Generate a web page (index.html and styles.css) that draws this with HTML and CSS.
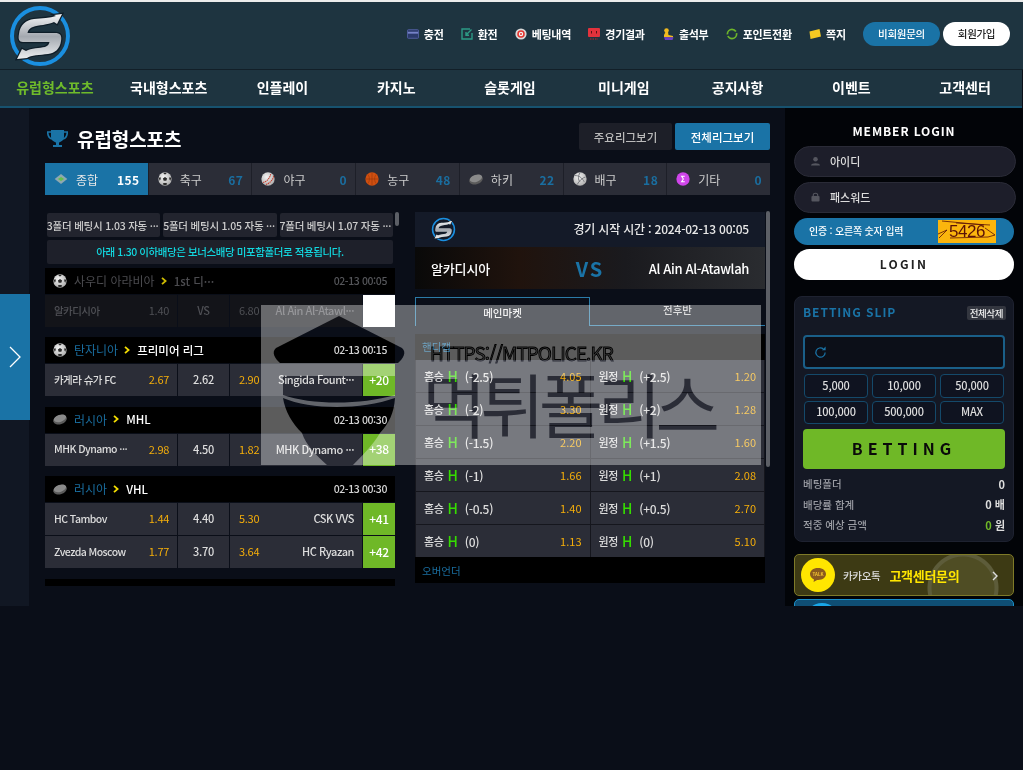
FILE: index.html
```html
<!DOCTYPE html>
<html lang="ko">
<head>
<meta charset="utf-8">
<title>유럽형스포츠</title>
<link rel="stylesheet" href="styles.css">
</head>
<body>
<svg class="defs" width="0" height="0" aria-hidden="true">
  <defs>
    <linearGradient id="silver" x1="0" y1="0" x2="0" y2="1">
      <stop offset="0" stop-color="#f4f5f7"/><stop offset=".5" stop-color="#a4a9b0"/><stop offset="1" stop-color="#eceef0"/>
    </linearGradient>
    <radialGradient id="ballshade" cx=".4" cy=".35" r=".75">
      <stop offset="0" stop-color="#f2f2f2"/><stop offset="1" stop-color="#a8a8a8"/>
    </radialGradient>
    <symbol id="logo" viewBox="0 0 64 64">
      <circle cx="32" cy="32" r="28" fill="none" stroke="#1a8fe0" stroke-width="4"/>
      <path d="M54 10 L49 20 L46 18 C40 21 30 21 25 23 C21 24.5 20 27 19.5 29 L47 29 C52 29 54 31 53 37 C52 45 47 49 40 50 C32 51 23 51 19 54 L9 55 L14 45 L18 47 C23 44 32 44 37 43 C40 42 41 40 41.5 38 L15 38 C11 38 10 35 11 30 C12 21 18 16 26 15 C34 14 42 14 48 12 L46 11 Z" fill="#0e1d28" stroke="#0e1d28" stroke-width="2.5"/>
      <path d="M54 10 L49 20 L46 18 C40 21 30 21 25 23 C21 24.5 20 27 19.5 29 L47 29 C52 29 54 31 53 37 C52 45 47 49 40 50 C32 51 23 51 19 54 L9 55 L14 45 L18 47 C23 44 32 44 37 43 C40 42 41 40 41.5 38 L15 38 C11 38 10 35 11 30 C12 21 18 16 26 15 C34 14 42 14 48 12 L46 11 Z" fill="url(#silver)"/>
    </symbol>
    <symbol id="soccer" viewBox="0 0 20 20">
      <circle cx="10" cy="10" r="9.5" fill="url(#ballshade)"/>
      <path d="M10 7 L13 9.2 L11.9 12.6 L8.1 12.6 L7 9.2 Z M10 .8 L7.6 2 L10 3.4 L12.4 2 Z M1.2 8.5 L2.4 12.4 L4 10 L3.4 7 Z M18.8 8.5 L17.6 12.4 L16 10 L16.6 7 Z M6.6 17.6 L10 19 L13.4 17.6 L12 15.8 L8 15.8 Z" fill="#2b2b2b"/>
    </symbol>
    <symbol id="puck" viewBox="0 0 20 20">
      <ellipse cx="10" cy="11" rx="10" ry="6.5" fill="#5b5b5b" transform="rotate(-18 10 11)"/>
      <ellipse cx="10" cy="9" rx="9" ry="5" fill="#8a8a8a" transform="rotate(-18 10 9)"/>
    </symbol>
    <symbol id="chev" viewBox="0 0 6 8">
      <path d="M1 .8 L4.6 4 L1 7.2" fill="none" stroke="#f2dc00" stroke-width="1.8"/>
    </symbol>
  </defs>
</svg>

<header class="header">
  <svg class="logo"><use href="#logo"/></svg>
  <nav class="tools">
    <a class="tool"><svg class="tool-ico" viewBox="0 0 14 12"><rect x=".5" y="1" width="13" height="10" rx="1" fill="#2b3a6b" stroke="#5664a8"/><rect x="1" y="3.4" width="12" height="2.2" fill="#7682c8"/></svg>충전</a>
    <a class="tool"><svg class="tool-ico" viewBox="0 0 12 12"><path d="M9 1 H1 V11 H11 V5" fill="none" stroke="#2d9a85" stroke-width="1.4"/><path d="M10.5 1.5 L5 7 M5 4 V7.2 H8" fill="none" stroke="#2d9a85" stroke-width="1.4"/></svg>환전</a>
    <a class="tool"><svg class="tool-ico" viewBox="0 0 12 12"><circle cx="6" cy="6" r="5.6" fill="#d9d9d9"/><circle cx="6" cy="6" r="3.8" fill="#e4352f"/><circle cx="6" cy="6" r="2.2" fill="#f3f3f3"/><circle cx="6" cy="6" r="1" fill="#e4352f"/></svg>베팅내역</a>
    <a class="tool"><svg class="tool-ico" viewBox="0 0 12 12"><rect x="0" y="0" width="12" height="9" rx="1" fill="#e2323c"/><path d="M3.5 3 V5.5 M8.5 3 V5.5" stroke="#5a1015" stroke-width="1"/><path d="M2 11 H10" stroke="#b5282f" stroke-width="1" stroke-dasharray="1.5 1"/></svg>경기결과</a>
    <a class="tool"><svg class="tool-ico" viewBox="0 0 12 12"><circle cx="4.5" cy="2.6" r="2.3" fill="#f0b91e"/><path d="M3.5 4 H6 L6.5 7 L11 8 V9.5 L2 9 V7 Z" fill="#f0b91e"/><path d="M2 9 L11.5 9.3 L10.5 12 L3 12 Z" fill="#6a3fc0"/></svg>출석부</a>
    <a class="tool"><svg class="tool-ico" viewBox="0 0 12 12"><circle cx="6" cy="6" r="4.6" fill="none" stroke="#6db52a" stroke-width="1.7" stroke-dasharray="12 1.6 12 1.6"/></svg>포인트전환</a>
    <a class="tool"><svg class="tool-ico" viewBox="0 0 12 12"><path d="M.5 3.5 L10.5 1 L12 8.5 L1.5 11 Z" fill="#f5c922"/></svg>쪽지</a>
    <a class="pill pill-blue">비회원문의</a>
    <a class="pill pill-white">회원가입</a>
  </nav>
</header>

<nav class="menu">
  <a class="menu-item is-active">유럽형스포츠</a>
  <a class="menu-item">국내형스포츠</a>
  <a class="menu-item">인플레이</a>
  <a class="menu-item">카지노</a>
  <a class="menu-item">슬롯게임</a>
  <a class="menu-item">미니게임</a>
  <a class="menu-item">공지사항</a>
  <a class="menu-item">이벤트</a>
  <a class="menu-item">고객센터</a>
</nav>

<main class="main">
  <aside class="rail">
    <div class="rail-tab"><svg class="rail-arrow" viewBox="0 0 12 22"><path d="M1 1 L11 11 L1 21" fill="none" stroke="#fff" stroke-width="1.3"/></svg></div>
  </aside>

  <section class="content">
    <div class="title-row">
      <h1 class="title">
        <svg class="trophy" viewBox="0 0 21 19"><path d="M4 0 H17 V7 C17 10 14 12 12 12.5 V15 H15 V17 H6 V15 H9 V12.5 C7 12 4 10 4 7 Z" fill="#1a73a6"/><path d="M4 2 H.7 C.7 6 2 8 5 9 M17 2 H20.3 C20.3 6 19 8 16 9" fill="none" stroke="#1a73a6" stroke-width="1.6"/></svg>
        유럽형스포츠
      </h1>
      <div class="view-btns">
        <a class="view-btn">주요리그보기</a>
        <a class="view-btn is-on">전체리그보기</a>
      </div>
    </div>

    <div class="sports">
      <a class="sport is-on"><svg class="sport-ico" viewBox="0 0 20 20"><path d="M10 3 L19 10 L10 17 L1 10 Z" fill="#8fa8b0"/><path d="M10 7 L14.5 10 L10 13 L5.5 10 Z" fill="#63c04a"/></svg><span class="sport-name">종합</span><b class="sport-num">155</b></a>
      <a class="sport"><svg class="sport-ico"><use href="#soccer"/></svg><span class="sport-name">축구</span><b class="sport-num">67</b></a>
      <a class="sport"><svg class="sport-ico" viewBox="0 0 20 20"><circle cx="10" cy="10" r="9.5" fill="url(#ballshade)"/><path d="M3 15 C8 14 13 9 14 2 M7 18 C12 16 17 12 18 6" fill="none" stroke="#c43a2a" stroke-width="1.5" stroke-dasharray="2 1"/></svg><span class="sport-name">야구</span><b class="sport-num">0</b></a>
      <a class="sport"><svg class="sport-ico" viewBox="0 0 20 20"><circle cx="10" cy="10" r="9.5" fill="#cf4f10"/><path d="M1 10 H19 M10 1 V19 M4 3.5 C7 7 7 13 4 16.5 M16 3.5 C13 7 13 13 16 16.5" fill="none" stroke="#8a3408" stroke-width=".7"/></svg><span class="sport-name">농구</span><b class="sport-num">48</b></a>
      <a class="sport"><svg class="sport-ico"><use href="#puck"/></svg><span class="sport-name">하키</span><b class="sport-num">22</b></a>
      <a class="sport"><svg class="sport-ico" viewBox="0 0 20 20"><circle cx="10" cy="10" r="9.5" fill="url(#ballshade)"/><path d="M10 1 C7 6 7 11 10 14 M3 5 C8 5 13 8 16 14 M18 7 C14 8 8 13 6 18" fill="none" stroke="#6a6c72" stroke-width="1.2"/></svg><span class="sport-name">배구</span><b class="sport-num">18</b></a>
      <a class="sport"><svg class="sport-ico" viewBox="0 0 20 20"><circle cx="10" cy="10" r="9.5" fill="#cf45ea"/><path d="M12.5 6 H8 L10.5 10 L8 14 H12.5" fill="none" stroke="#fff" stroke-width="1.5"/></svg><span class="sport-name">기타</span><b class="sport-num">0</b></a>
    </div>

    <div class="panes">
      <div class="pane-left">
        <div class="bonus-row">
          <a class="bonus">3폴더 베팅시 1.03 자동 ···</a>
          <a class="bonus">5폴더 베팅시 1.05 자동 ···</a>
          <a class="bonus">7폴더 베팅시 1.07 자동 ···</a>
        </div>
        <p class="notice">아래 1.30 이하배당은 보너스배당 미포함폴더로 적용됩니다.</p>

        <div class="group is-dim">
          <div class="league"><svg class="league-ico"><use href="#soccer"/></svg><span class="country">사우디 아라비아</span><svg class="chev"><use href="#chev"/></svg><span class="league-name">1st 디···</span><time class="kick">02-13 00:05</time></div>
          <div class="row"><div class="side"><span class="team">알카디시아</span><span class="odd">1.40</span></div><div class="mid">VS</div><div class="side"><span class="odd">6.80</span><span class="team team-r">Al Ain Al-Atawl···</span></div><div class="plus is-blank"></div></div>
        </div>

        <div class="group">
          <div class="league"><svg class="league-ico"><use href="#soccer"/></svg><span class="country">탄자니아</span><svg class="chev"><use href="#chev"/></svg><span class="league-name">프리미어 리그</span><time class="kick">02-13 00:15</time></div>
          <div class="row"><div class="side"><span class="team">카게라 슈가 FC</span><span class="odd">2.67</span></div><div class="mid">2.62</div><div class="side"><span class="odd">2.90</span><span class="team team-r">Singida Fount···</span></div><div class="plus">+20</div></div>
        </div>

        <div class="group">
          <div class="league"><svg class="league-ico"><use href="#puck"/></svg><span class="country">러시아</span><svg class="chev"><use href="#chev"/></svg><span class="league-name">MHL</span><time class="kick">02-13 00:30</time></div>
          <div class="row"><div class="side"><span class="team">MHK Dynamo ···</span><span class="odd">2.98</span></div><div class="mid">4.50</div><div class="side"><span class="odd">1.82</span><span class="team team-r">MHK Dynamo ···</span></div><div class="plus">+38</div></div>
        </div>

        <div class="group">
          <div class="league"><svg class="league-ico"><use href="#puck"/></svg><span class="country">러시아</span><svg class="chev"><use href="#chev"/></svg><span class="league-name">VHL</span><time class="kick">02-13 00:30</time></div>
          <div class="row"><div class="side"><span class="team">HC Tambov</span><span class="odd">1.44</span></div><div class="mid">4.40</div><div class="side"><span class="odd">5.30</span><span class="team team-r">CSK VVS</span></div><div class="plus">+41</div></div>
          <div class="row row-next"><div class="side"><span class="team">Zvezda Moscow</span><span class="odd">1.77</span></div><div class="mid">3.70</div><div class="side"><span class="odd">3.64</span><span class="team team-r">HC Ryazan</span></div><div class="plus">+42</div></div>
        </div>

        <div class="group-strip"></div>
        <div class="thumb thumb-left"></div>
      </div>

      <div class="pane-right">
        <div class="match-top">
          <svg class="match-logo"><use href="#logo"/></svg>
          <span class="match-time">경기 시작 시간 : 2024-02-13 00:05</span>
        </div>
        <div class="match-teams">
          <span class="match-team">알카디시아</span>
          <span class="vs">VS</span>
          <span class="match-team match-team-away">Al Ain Al-Atawlah</span>
        </div>
        <div class="market-tabs">
          <a class="market-tab is-on">메인마켓</a>
          <a class="market-tab">전후반</a>
        </div>
        <div class="market-head">핸디캡</div>
        <div class="market-grid">
          <div class="cell"><span class="cell-name">홈승</span><b class="h">H</b><span class="line">(-2.5)</span><span class="odd">4.05</span></div>
          <div class="cell"><span class="cell-name">원정</span><b class="h">H</b><span class="line">(+2.5)</span><span class="odd">1.20</span></div>
          <div class="cell"><span class="cell-name">홈승</span><b class="h">H</b><span class="line">(-2)</span><span class="odd">3.30</span></div>
          <div class="cell"><span class="cell-name">원정</span><b class="h">H</b><span class="line">(+2)</span><span class="odd">1.28</span></div>
          <div class="cell"><span class="cell-name">홈승</span><b class="h">H</b><span class="line">(-1.5)</span><span class="odd">2.20</span></div>
          <div class="cell"><span class="cell-name">원정</span><b class="h">H</b><span class="line">(+1.5)</span><span class="odd">1.60</span></div>
          <div class="cell"><span class="cell-name">홈승</span><b class="h">H</b><span class="line">(-1)</span><span class="odd">1.66</span></div>
          <div class="cell"><span class="cell-name">원정</span><b class="h">H</b><span class="line">(+1)</span><span class="odd">2.08</span></div>
          <div class="cell"><span class="cell-name">홈승</span><b class="h">H</b><span class="line">(-0.5)</span><span class="odd">1.40</span></div>
          <div class="cell"><span class="cell-name">원정</span><b class="h">H</b><span class="line">(+0.5)</span><span class="odd">2.70</span></div>
          <div class="cell"><span class="cell-name">홈승</span><b class="h">H</b><span class="line">(0)</span><span class="odd">1.13</span></div>
          <div class="cell"><span class="cell-name">원정</span><b class="h">H</b><span class="line">(0)</span><span class="odd">5.10</span></div>
        </div>
        <div class="market-foot">오버언더</div>
        <div class="thumb thumb-right"></div>
      </div>
    </div>
  </section>

  <aside class="side-col">
    <h2 class="login-title">MEMBER LOGIN</h2>
    <div class="field"><svg class="field-ico" viewBox="0 0 10 10"><circle cx="5" cy="3" r="2.5" fill="#55565f"/><path d="M0 10 C0 6.5 10 6.5 10 10 Z" fill="#55565f"/></svg>아이디</div>
    <div class="field field-next"><svg class="field-ico" viewBox="0 0 10 10"><rect x="0.5" y="4" width="9" height="6" rx="1" fill="#55565f"/><path d="M2.5 4.5 V3 C2.5 0 7.5 0 7.5 3 V4.5" fill="none" stroke="#55565f" stroke-width="1.2"/></svg>패스워드</div>
    <div class="captcha">
      <span class="captcha-label">인증 : 오른쪽 숫자 입력</span>
      <span class="captcha-code">5426<svg class="captcha-lines" viewBox="0 0 58 23"><path d="M0 14 L9 10 L1 18 M4 1 L46 5 M12 18 L50 17 L57 15 L47 8 M18 3 L52 5" fill="none" stroke="#5a1208" stroke-width=".8"/></svg></span>
    </div>
    <a class="login-btn">LOGIN</a>

    <section class="slip">
      <div class="slip-head"><span class="slip-title">BETTING SLIP</span><a class="slip-clear">전체삭제</a></div>
      <div class="slip-input"><svg class="refresh" viewBox="0 0 14 14"><path d="M12 7 A5 5 0 1 1 10 3" fill="none" stroke="#1a73a6" stroke-width="1.3"/><path d="M12.5 .5 V4.5 H8.5 Z" fill="#1a73a6"/></svg></div>
      <div class="amounts">
        <a class="amount">5,000</a><a class="amount">10,000</a><a class="amount">50,000</a>
        <a class="amount">100,000</a><a class="amount">500,000</a><a class="amount">MAX</a>
      </div>
      <a class="bet-btn">BETTING</a>
      <dl class="summary">
        <div class="sum-row"><dt>베팅폴더</dt><dd>0</dd></div>
        <div class="sum-row"><dt>배당률 합계</dt><dd>0 배</dd></div>
        <div class="sum-row"><dt>적중 예상 금액</dt><dd><em class="won">0</em> 원</dd></div>
      </dl>
    </section>

    <a class="banner banner-kakao">
      <span class="talk"><svg class="talk-ico" viewBox="0 0 20 18"><path d="M10 1 C4.5 1 1 4 1 8 C1 11 3 13 5.5 14 L5 17 L9 14.6 C15 15 19 12 19 8 C19 4 15.5 1 10 1 Z" fill="#8a5a1e"/><text class="talk-text" x="10" y="10" text-anchor="middle">TALK</text></svg></span>
      <span class="kakao-name">카카오톡</span>
      <b class="kakao-cs">고객센터문의</b>
      <svg class="banner-chev" viewBox="0 0 6 10"><path d="M1 1 L5 5 L1 9" fill="none" stroke="#ddd" stroke-width="1.4"/></svg>
    </a>
    <a class="banner banner-blue"><span class="tele"></span></a>
  </aside>

  <div class="wm">
    <svg class="wm-hat" viewBox="0 0 160 160">
      <path d="M78 11 L141 43 C146 47 142 54 137 58 L19 58 C14 54 10 47 15 43 Z" fill="#000"/>
      <path d="M22 71 L134 71 L134 90 C100 100 50 100 22 90 Z" fill="#000"/>
      <path d="M22 93 C50 105 100 105 134 93 C133 108 128 118 119 128 C112 140 100 152 92 160 L66 160 C55 150 45 140 41 128 C31 118 24 106 22 93 Z" fill="#000"/>
    </svg>
    <div class="wm-url">HTTPS://MTPOLICE.KR</div>
    <div class="wm-name">먹튀폴리스</div>
  </div>
</main>
</body>
</html>
```

FILE: styles.css
```css
* { box-sizing: border-box; margin: 0; padding: 0; }
html, body { height: 770px; overflow: hidden; }
body {
  background: #0a0e18;
  color: #fff;
  font-family: "Noto Sans CJK KR", "Noto Sans", sans-serif;
  font-size: 11px;
  border-top: 2px solid #ececec;
}
a { color: inherit; text-decoration: none; }
.defs { position: absolute; }

/* header */
.header {
  height: 68px;
  background: #1e3440;
  border-bottom: 1px solid #121f28;
  display: flex;
  align-items: center;
  justify-content: space-between;
  padding: 0 13px 0 8px;
}
.logo { width: 64px; height: 64px; }
.tools { display: flex; align-items: center; gap: 17.3px; margin-bottom: 4px; font-weight: 700; letter-spacing: -.3px; }
.tool { display: flex; align-items: center; gap: 5px; }
.tool-ico { width: 12px; height: 12px; }
.pill {
  height: 24px;
  border-radius: 12px;
  display: flex;
  align-items: center;
  justify-content: center;
  font-weight: 500;
  font-size: 10.5px;
}
.pill-blue { width: 77px; background: #1a73a6; }
.pill-white { width: 67px; background: #fff; color: #222; margin-left: -14.3px; }

.menu {
  height: 38px;
  width: 1024px;
  margin-left: -2px;
  display: grid;
  grid-template-columns: repeat(9, 1fr);
  align-items: center;
  background: #1e3440;
  border-bottom: 2px solid #17526f;
  font-size: 14px;
  font-weight: 700;
  text-align: center;
  padding-bottom: 2px;
}
.menu-item.is-active { color: #6fbb2b; }

/* layout */
.main { position: relative; display: flex; height: 498px; overflow: hidden; }
.rail { width: 29px; background: #111723; padding-top: 186px; }
.rail-tab {
  width: 30px;
  height: 126px;
  background: #1a73a6;
  display: flex;
  align-items: center;
  justify-content: center;
  position: relative;
}
.rail-arrow { width: 12px; height: 22px; }
.content { width: 756px; padding: 15px 15px 0 16px; background: #0a0e18; }
.title-row { display: flex; justify-content: space-between; height: 27px; }
.title { display: flex; align-items: center; gap: 9px; font-size: 19px; font-weight: 700; padding-left: 2px; padding-top: 3px; letter-spacing: -.1px; }
.trophy { width: 21px; height: 19px; margin-top: 2px; }
.view-btns { display: flex; gap: 3px; }
.view-btn {
  width: 93px;
  display: flex; align-items: center; justify-content: center;
  background: #1d1f28;
  color: #bbb;
  font-size: 11.5px;
  font-weight: 500;
  border-radius: 2px;
}
.view-btn.is-on { width: 95px; background: #1a73a6; color: #fff; }

.sports { display: grid; grid-template-columns: repeat(7, 1fr); gap: 1px; margin-top: 13px; height: 32px; background: #1d1f28; }
.sport { display: flex; align-items: center; padding: 0 8px; background: #2b2d37; color: #ccc; font-size: 12px; }
.sport.is-on { background: #1a73a6; color: #e8e8e8; }
.sport-ico { width: 14px; height: 14px; flex: none; margin: 0 9px 0 1px; }
.sport-name { flex: 1; margin-left: -1px; }
.sport-num { color: #1a6ea0; font-weight: 700; font-size: 12px; letter-spacing: .5px; }
.sport.is-on .sport-num { color: #fff; }

.panes { display: flex; margin-top: 16px; }

/* left list */
.pane-left { position: relative; width: 370px; height: 375px; padding-top: 2px; }
.thumb { position: absolute; background: #5c5f66; border-radius: 2px; }
.thumb-left { left: 350px; top: 1px; width: 4px; height: 14px; }
.thumb-right { left: 351px; top: 0; width: 4px; height: 256px; }
.bonus-row { display: flex; gap: 3px; margin-left: 2px; width: 346px; }
.bonus {
  flex: 1; height: 24px;
  background: #22242e;
  color: #ccc;
  border-radius: 2px;
  display: flex; align-items: center; justify-content: center;
  padding-right: 2px;
  font-size: 10.5px;
  font-weight: 500;
  letter-spacing: -.22px;
  white-space: nowrap;
  overflow: hidden;
}
.notice {
  margin: 3px 0 4px 2px;
  width: 346px;
  height: 24px;
  background: #1e202a;
  border-radius: 2px;
  color: #12d7df;
  font-size: 10.5px;
  font-weight: 500;
  letter-spacing: -.42px;
  line-height: 23px;
  text-align: center;
}
.group { width: 350px; margin-bottom: 10.4px; }
.league {
  height: 26px;
  background: #000;
  display: flex;
  align-items: center;
  padding: 0 8px 1px;
  font-size: 11.5px;
  font-weight: 500;
}
.league-ico { width: 14px; height: 14px; margin-right: 7px; }
.country { color: #1a6ea0; font-size: 12px; font-weight: 400; }
.chev { width: 6px; height: 8px; margin: 0 7px 0 6px; }
.league-name { flex: 1; font-size: 11.5px; }
.kick { color: #d5d5d5; font-size: 10.5px; letter-spacing: -.4px; }
.row {
  display: grid;
  grid-template-columns: 132px 51px 132px 32px;
  gap: 1px;
  margin-top: 1px;
  height: 32px;
  color: #ddd;
  font-size: 11px;
  font-weight: 500;
  letter-spacing: -.3px;
}
.side { background: #2b2d37; display: flex; align-items: center; justify-content: space-between; padding: 0 8px 2px 9px; white-space: nowrap; }
.team { font-size: 10.5px; letter-spacing: -.55px; }
.team-r { text-align: right; padding-left: 8px; font-size: 11px; letter-spacing: -.45px; }
.mid { background: #2b2d37; display: flex; align-items: center; justify-content: center; padding-bottom: 2px; }
.odd { color: #f5ae0a; font-weight: 400; }
.plus { background: #6fb827; color: #fff; display: flex; align-items: center; justify-content: center; padding-bottom: 2px; font-size: 12px; }
.plus.is-blank { background: #fff; }

/* first, closed match: muted text and cells, icon and blank cell stay bright */
.is-dim .country, .is-dim .league-name { color: #4c4c50; }
.is-dim .kick { color: #55565a; }
.is-dim .chev { opacity: .85; }
.is-dim .side, .is-dim .mid { background: #131419; color: #4f5055; }
.is-dim .odd { color: #4f5055; }
.is-dim .team-r { color: #5a5b60; }

.group-strip { width: 350px; height: 7px; background: #000; }

/* right market */
.pane-right { position: relative; width: 350px; padding-top: 1px; }
.match-top {
  height: 35px;
  background: #141a28;
  display: flex; align-items: center; justify-content: space-between;
  padding: 0 16px;
}
.match-logo { width: 25px; height: 25px; }
.match-time { font-size: 12px; font-weight: 500; letter-spacing: -.2px; color: #e8e8e8; padding-bottom: 2px; }
.match-teams {
  height: 42px;
  background: linear-gradient(90deg, #090909, #20130d 30%, #1a1a1e 60%, #2a2c30);
  display: flex; align-items: center; justify-content: space-between;
  padding: 0 16px;
  font-size: 13px;
  font-weight: 500;
}
.match-team { width: 118px; letter-spacing: -.15px; }
.match-team-away { text-align: right; white-space: nowrap; letter-spacing: -.35px; }
.vs { color: #1a73a6; font-size: 20px; font-weight: 700; letter-spacing: 2px; }
.market-tabs { display: grid; grid-template-columns: 175px 175px; margin-top: 8px; height: 29px; }
.market-tab { display: flex; align-items: center; justify-content: center; font-size: 10.5px; font-weight: 500; color: #ccc; border-bottom: 1px solid #2b7ba8; padding-bottom: 3px; }
.market-tab.is-on { color: #eee; border: 1px solid #2b7ba8; border-bottom: 0; padding-bottom: 0; }
.market-head { margin-top: 8px; height: 26px; background: #000; color: #1a6ea0; font-size: 10.5px; line-height: 26px; padding-left: 7px; }
.market-grid { display: grid; grid-template-columns: 1fr 1fr; gap: 1px; background: #15161d; padding: 0 1px; }
.cell { height: 32px; background: #2b2d37; display: flex; align-items: center; padding: 0 8px; color: #ddd; font-size: 11px; font-weight: 500; }
.cell-name { letter-spacing: -.4px; }
.h { color: #35dc00; font-size: 14px; font-weight: 500; margin: 0 7px 0 4px; }
.line { flex: 1; font-size: 12px; letter-spacing: -.3px; }
.market-foot { height: 26px; background: #000; color: #1a6ea0; font-size: 10.5px; line-height: 27px; padding-left: 7px; }

/* sidebar */
.side-col { width: 238px; background: #020408; padding: 14px 7px 0 9px; }
.login-title { font-size: 12px; font-weight: 700; text-align: center; letter-spacing: .9px; line-height: 18px; padding-right: 2px; }
.field {
  margin-top: 6px;
  height: 31px;
  border-radius: 16px;
  background: #1d1e2a;
  border: 1px solid #2a2b37;
  display: flex; align-items: center;
  padding: 0 0 2px 16px;
  color: #ddd;
  font-size: 11px;
  font-weight: 500;
}
.field-next { margin-top: 5px; }
.field-ico { width: 9px; height: 10px; margin-right: 10px; margin-top: 1px; }
.captcha {
  margin-top: 5px;
  width: 220px;
  height: 27px;
  border-radius: 14px;
  background: #1a73a6;
  display: flex; align-items: center; justify-content: space-between;
  padding: 0 18px 0 15px;
}
.captcha-label { font-size: 10px; font-weight: 500; letter-spacing: -.2px; padding-bottom: 2px; }
.captcha-code {
  position: relative;
  width: 58px; height: 23px;
  background: #fbb50d;
  color: #5a1208;
  font-size: 17px;
  line-height: 23px;
  letter-spacing: -.5px;
  text-align: center;
  font-family: "Liberation Sans", sans-serif;
}
.captcha-lines { position: absolute; left: 0; top: 0; width: 58px; height: 23px; }
.login-btn {
  display: flex; align-items: center; justify-content: center;
  margin-top: 4px;
  width: 220px;
  height: 31px;
  padding-bottom: 2px;
  background: #fff;
  color: #222;
  border-radius: 16px;
  font-size: 12px;
  font-weight: 700;
  letter-spacing: 2.2px;
}
.slip {
  margin-top: 16px;
  width: 220px;
  height: 246px;
  background: #141824;
  border: 1px solid #1e2230;
  border-radius: 8px;
  padding: 8px 8px 0;
}
.slip-head { display: flex; justify-content: space-between; align-items: center; height: 15px; }
.slip-title { color: #1a73a6; font-size: 12px; font-weight: 700; letter-spacing: .95px; padding-bottom: 2px; }
.slip-clear { background: #33363f; color: #eee; border-radius: 2px; font-size: 9.5px; font-weight: 500; padding: 0 3px; line-height: 14px; letter-spacing: -.4px; margin-right: -1px; }
.slip-input {
  margin-top: 15px;
  height: 34px;
  background: #0c0f18;
  border: 2px solid #1a5f88;
  border-radius: 4px;
  display: flex; align-items: center;
  padding-left: 9px;
}
.refresh { width: 13px; height: 13px; }
.amounts { display: grid; grid-template-columns: repeat(3, 1fr); gap: 3px 4px; margin: 5px 1px 0; }
.amount {
  height: 23.5px;
  border: 1px solid #14496a;
  border-radius: 4px;
  background: #0f1320;
  display: flex; align-items: center; justify-content: center;
  padding-bottom: 2px;
  color: #ddd;
  font-weight: 500;
  font-size: 11px;
  letter-spacing: -.2px;
}
.bet-btn {
  display: flex; align-items: center; justify-content: center;
  margin-top: 5px;
  height: 40px;
  padding-bottom: 2px;
  background: #6fb827;
  border-radius: 4px;
  color: #0a0a0a;
  font-size: 16px;
  font-weight: 700;
  letter-spacing: 5px;
}
.summary { margin-top: 5px; }
.sum-row { display: flex; justify-content: space-between; align-items: center; height: 20.5px; color: #9a9ca3; font-size: 10.5px; font-weight: 500; padding-bottom: 1px; }
.sum-row dd { color: #ddd; font-size: 11px; font-weight: 700; }
.won { color: #6fb827; font-style: normal; }
.banner { display: flex; align-items: center; width: 220px; height: 42px; border-radius: 5px; position: relative; overflow: hidden; }
.banner-kakao {
  margin-top: 12px;
  background: radial-gradient(circle at 168px 33px, #4f4d24 0 31px, #5d5c3a 32px 35px, #3d3a14 36px);
  border: 1px solid #7e7a28;
  padding-left: 6px;
}
.talk { width: 34px; height: 34px; border-radius: 50%; background: #ffe600; display: flex; align-items: center; justify-content: center; }
.talk-ico { width: 18px; height: 16px; }
.talk-text { fill: #f1c232; font-size: 5px; font-weight: 700; }
.kakao-name { margin-left: 8px; color: #ddd; font-size: 10.5px; font-weight: 500; letter-spacing: -.3px; }
.kakao-cs { margin-left: 9px; color: #ffe600; font-size: 13px; font-weight: 700; letter-spacing: -.3px; }
.banner-chev { position: absolute; right: 15px; top: 16px; width: 6px; height: 10px; }
.banner-blue { margin-top: 3px; background: #0f4e74; border: 1px solid #1a8fc8; padding-left: 10px; }
.tele { width: 34px; height: 34px; border-radius: 50%; background: #19a7e8; }

/* watermark: black parts let the page show through unchanged */
.wm {
  position: absolute;
  left: 261px;
  top: 197px;
  width: 500px;
  height: 160px;
  background: #5c5c5c;
  mix-blend-mode: screen;
  overflow: hidden;
}
.wm-hat { position: absolute; left: 0; top: 0; width: 160px; height: 160px; }
.wm-url {
  position: absolute;
  left: 169px;
  top: 35px;
  color: #404040;
  font-size: 19px;
  line-height: 26px;
  letter-spacing: -1px;
  -webkit-text-stroke: .9px #000;
  white-space: nowrap;
}
.wm-name {
  position: absolute;
  left: 161px;
  top: 48px;
  color: #000;
  font-size: 70px;
  line-height: 100px;
  letter-spacing: -6px;
  white-space: nowrap;
}
```
